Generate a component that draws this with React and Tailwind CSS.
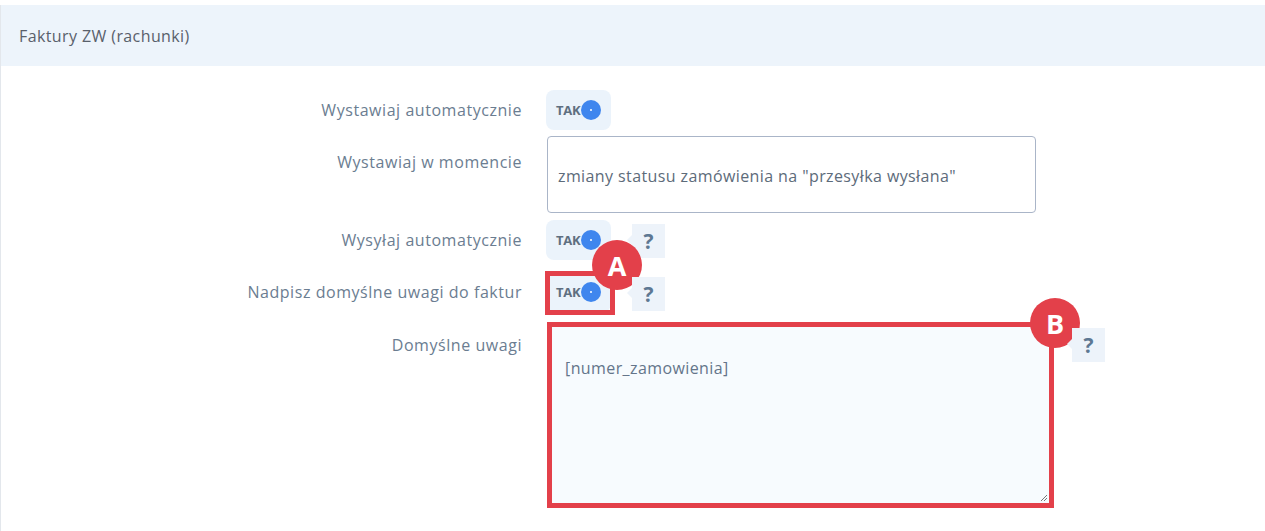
import React from "react";

function Toggle() {
  return (
    <div className="flex h-[40px] w-[65px] items-center rounded-[8px] bg-[#ebf3fb] pl-[10px]">
      <span className="text-[13px] font-bold leading-none tracking-[-0.3px] text-[#5f6f80]">TAK</span>
      <span className="ml-[1px] flex h-[20px] w-[20px] items-center justify-center rounded-full bg-[#3f86ee]">
        <span className="h-[2px] w-[2px] rounded-full bg-white" />
      </span>
    </div>
  );
}

function Help() {
  return (
    <div className="relative flex h-[34px] w-[33px] items-center justify-center bg-[#edf3fa]">
      <span className="absolute left-[-5px] top-[11px] h-0 w-0 border-y-[5px] border-r-[5px] border-y-transparent border-r-[#edf3fa]" />
      <span className="text-[21px] font-bold leading-none text-[#5d7893]">?</span>
    </div>
  );
}

function Badge({ letter }) {
  return (
    <div className="flex h-[50px] w-[50px] items-center justify-center rounded-full bg-[#e3404a] text-[27px] font-bold leading-none text-white">
      {letter}
    </div>
  );
}

function Label({ children, pt }) {
  return (
    <div className={`w-[521px] shrink-0 text-right text-[16px] leading-[20px] tracking-[0.55px] text-[#6b7d91] ${pt}`}>
      {children}
    </div>
  );
}

export default function App() {
  return (
    <div className="h-[531px] w-[1265px] overflow-hidden bg-white pt-[5px]" style={{ fontFamily: '"Open Sans", "Noto Sans", sans-serif' }}>
      <div className="h-full border-l border-[#e3e7ec]">
        <div className="flex h-[61px] items-center bg-[#edf4fb] pl-[18px] text-[16px] tracking-[0.4px] text-[#59606b]">
          Faktury ZW (rachunki)
        </div>

        <div className="mt-[24px] flex items-start">
          <Label pt="pt-[10px]">Wystawiaj automatycznie</Label>
          <div className="ml-[24px]">
            <Toggle />
          </div>
        </div>

        <div className="mt-[6px] flex items-start">
          <Label pt="pt-[16px]">Wystawiaj w momencie</Label>
          <div className="ml-[25px] flex h-[77px] w-[489px] items-center rounded-[4px] border border-[#aab5c8] bg-white pl-[10px] pt-[2px] text-[16px] tracking-[0.4px] text-[#5d6b7a]">
            zmiany statusu zamówienia na "przesyłka wysłana"
          </div>
        </div>

        <div className="mt-[7px] flex items-start">
          <Label pt="pt-[10px]">Wysyłaj automatycznie</Label>
          <div className="ml-[24px] flex items-start gap-[21px]">
            <Toggle />
            <div className="mt-[4px]">
              <Help />
            </div>
          </div>
        </div>

        <div className="mt-[12px] flex items-start">
          <Label pt="pt-[10px]">Nadpisz domyślne uwagi do faktur</Label>
          <div className="ml-[24px] flex items-start gap-[21px]">
            <div className="relative">
              <Toggle />
              <div className="absolute left-[-1px] top-[-1px] h-[44px] w-[70px] border-[5px] border-[#e3404a]" />
              <div className="absolute left-[46px] top-[-32px]">
                <Badge letter="A" />
              </div>
            </div>
            <div className="mt-[5px]">
              <Help />
            </div>
          </div>
        </div>

        <div className="mt-[10px] flex items-start">
          <Label pt="pt-[13px]">Domyślne uwagi</Label>
          <div className="ml-[25px] flex items-start gap-[18px]">
            <div className="relative">
              <div className="relative h-[186px] w-[507px] border-[5px] border-[#e3404a] bg-[#f7fbfe] pl-[13px] pt-[31px] text-[16px] leading-[20px] tracking-[0.4px] text-[#64758a]">
                [numer_zamowienia]
                <svg className="absolute bottom-[1px] right-[1px]" width="8" height="8" viewBox="0 0 8 8">
                  <path d="M7 1 L1 7 M7 4 L4 7" stroke="#777" strokeWidth="1" />
                </svg>
              </div>
              <div className="absolute right-[-26px] top-[-24px]">
                <Badge letter="B" />
              </div>
            </div>
            <div className="mt-[6px]">
              <Help />
            </div>
          </div>
        </div>
      </div>
    </div>
  );
}
